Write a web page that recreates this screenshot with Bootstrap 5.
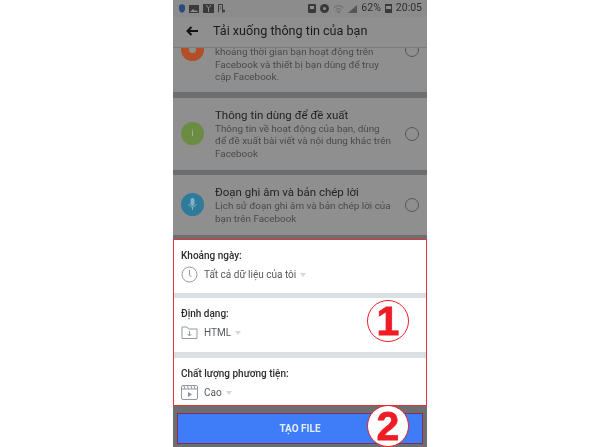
<!DOCTYPE html>
<html lang="vi"><head><meta charset="utf-8">
<link href="https://cdn.jsdelivr.net/npm/bootstrap@5.3.0/dist/css/bootstrap.min.css" rel="stylesheet">
<style>
html,body{margin:0;height:447px;overflow:hidden;background:#fff}
body{font-family:Roboto,"Liberation Sans",sans-serif;filter:blur(.4px)}
.phone{width:254px;height:447px;margin-left:173px;background:#6d6e70;position:relative;overflow:hidden}
.statusbar{height:17px;background:#8c8c8c;padding:0 5px 0 6px;font-size:10.5px;color:#2e2e2e;line-height:1}
.sb-ic{display:block}
.appbar{height:31px;background:#8f8f8f;border-bottom:1px solid #7c7c7c;padding:0 0 2px 13px;gap:15px;color:#1b1b1b;font-size:12.6px;position:relative;z-index:1}
.scroller{height:191px;overflow:hidden;justify-content:flex-end;padding-bottom:4px}
.optrow{background:#8f8f8f;padding:0 8px 0 8px;gap:11px;flex:none}
.opt-mid{height:72px;margin-top:6px}
.opt-low{height:60px;margin-top:5px}
.opt-top{height:84px}
.dot{width:23px;height:23px;border-radius:50%;flex:none;margin-bottom:1px}
.dot-o{background:#b24f28;display:flex;align-items:center;justify-content:center}
.dot-o-core{width:7px;height:7px;border-radius:50%;background:#8f8f8f}
.dot-g{background:#6a8c43}.dot-b{background:#2f7b99}
.dot-i{font-size:9px;color:#a9c08c}
.otext{width:178px;flex:none}
.otext-end{align-self:flex-end;padding-bottom:8px}
.ohead{font-size:11.5px;line-height:15px;color:#232323}
.obody{font-size:9.9px;line-height:12.6px;color:#4a4a4a}
.radio{width:14px;height:14px;border:1px solid #585858;border-radius:50%;flex:none;margin-left:auto}
.sheet{background:#fff;border:1px solid #e8323a;height:167px;flex:none}
.sect{padding:0 7px;flex:none;height:54px}
.sect.sfirst{height:53px}
.sect.slast{height:47px}
.lbl{font-size:10px;font-weight:500;color:#2c2c2c;line-height:13px;margin-top:9px}
.val{font-size:10px;color:#56585c;gap:6px;margin-top:4px;line-height:17px}
.caret{width:0;height:0;border:3.5px solid transparent;border-top:4px solid #d4d6da;border-bottom:0;margin-left:-2px}
.sdiv{height:6px;background:#dcdfe4;flex:none}
.sdiv.sthin{height:5px}
.footbar{padding:7px 4px 0}
.mainbtn{height:31px;width:100%;background:#3f7cf8;border:1px solid #8a2a5a;border-radius:0;color:#e3ecfb;font-size:10px;font-weight:700;padding:0;box-shadow:none}
.callout{position:absolute;left:194px;width:42px;height:42px;border-radius:50%;background:#fff;border:1.5px solid #e8202a;color:#ee1c25;font:700 41px/40px "Liberation Sans",sans-serif;text-align:center;-webkit-text-stroke:.8px #ee1c25}
.c1{top:300px}.c2{top:405px}
</style></head>
<body>
<div class="phone d-flex flex-column">
  <div class="statusbar d-flex align-items-center gap-1">
    <svg class="sb-ic" width="6" height="9" viewBox="0 0 6 9"><path d="M3 0l3 1.500V5c0 2-1.500 3-3 4C1.500 8 0 7 0 5V1.500z" fill="#2d4a7e"/></svg>
    <svg class="sb-ic" width="10" height="8" viewBox="0 0 10 8"><rect width="10" height="8" fill="#3a3a3a"/><path d="M1 7l3-3 2 2 1-1 2 2z" fill="#8f8f8f"/></svg>
    <svg class="sb-ic" width="11" height="9" viewBox="0 0 11 9"><rect width="11" height="9" fill="#3a3a3a"/><path d="M3 1l2.500 3L8 1M5.500 4v4" stroke="#8f8f8f" fill="none"/></svg>
    <svg class="sb-ic" width="7" height="9" viewBox="0 0 7 9"><path d="M.5 8.500V.5h4v8M2 3h1M2 5h1M5 5.500l2 3M7 5.500l-2 3" stroke="#3a3a3a" fill="none"/></svg>
    <div class="ms-auto d-flex align-items-center gap-1">
      <svg class="sb-ic" width="8" height="9" viewBox="0 0 8 9"><rect width="8" height="9" rx="1" fill="#3a3a3a"/><rect x="2" y="2" width="4" height="3" fill="#8f8f8f"/></svg>
      <svg class="sb-ic" width="9" height="9" viewBox="0 0 9 9"><circle cx="4.500" cy="4.500" r="4.500" fill="#3a3a3a"/><circle cx="4.500" cy="4.500" r="1.500" fill="#8f8f8f"/></svg>
      <svg class="sb-ic" width="11" height="8" viewBox="0 0 11 8"><path d="M.5 3c3-3 7-3 10 0M2.500 5c2-2 4-2 6 0M5.500 8l1.500-1.500c-1-.7-2-.7-3 0z" stroke="#666" fill="none"/></svg>
      <svg class="sb-ic" width="9" height="8" viewBox="0 0 9 8"><path d="M0 8L9 0v8z" fill="#555"/></svg>
      <span>62%</span>
      <svg class="sb-ic" width="7" height="9" viewBox="0 0 7 9"><rect width="7" height="9" fill="#3a3a3a"/><rect x="1" y="2" width="5" height="3" fill="#8f8f8f"/></svg>
      <span>20:05</span>
    </div>
  </div>
  <div class="appbar d-flex align-items-center">
    <svg width="12" height="10" viewBox="0 0 12 10"><path d="M12 5H2M5.500 1L1.500 5l4 4" stroke="#111" stroke-width="2" fill="none"/></svg>
    <span>Tải xuống thông tin của bạn</span>
  </div>
  <div class="scroller d-flex flex-column">
    <div class="optrow opt-top d-flex align-items-center">
      <div class="dot dot-o"><div class="dot-o-core"></div></div>
      <div class="otext otext-end"><div class="obody">khoảng thời gian bạn hoạt động trên<br>Facebook và thiết bị bạn dùng để truy<br>cập Facebook.</div></div>
      <div class="radio"></div>
    </div>
    <div class="optrow opt-mid d-flex align-items-center">
      <div class="dot dot-g dot-i d-flex align-items-center justify-content-center">i</div>
      <div class="otext"><div class="ohead">Thông tin dùng để đề xuất</div><div class="obody">Thông tin về hoạt động của bạn, dùng để đề xuất bài viết và nội dung khác trên Facebook</div></div>
      <div class="radio"></div>
    </div>
    <div class="optrow opt-low d-flex align-items-center">
      <div class="dot dot-b d-flex align-items-center justify-content-center">
        <svg width="9" height="13" viewBox="0 0 9 13"><rect x="2.500" y="0" width="4" height="8" rx="2" fill="#7fb3c8"/><path d="M1 6c0 4 7 4 7 0M4.500 9v3" stroke="#7fb3c8" fill="none"/></svg>
      </div>
      <div class="otext"><div class="ohead">Đoạn ghi âm và bản chép lời</div><div class="obody">Lịch sử đoạn ghi âm và bản chép lời của bạn trên Facebook</div></div>
      <div class="radio"></div>
    </div>
  </div>
  <div class="sheet d-flex flex-column">
    <div class="sect sfirst">
      <div class="lbl">Khoảng ngày:</div>
      <div class="val d-flex align-items-center">
        <svg width="17" height="17" viewBox="0 0 17 17"><circle cx="8.500" cy="8.500" r="7.500" fill="none" stroke="#9298a3"/><path d="M8.500 4v5l2 2" fill="none" stroke="#9298a3"/></svg>
        <span>Tất cả dữ liệu của tôi</span><i class="caret"></i>
      </div>
    </div>
    <div class="sdiv sthin"></div>
    <div class="sect">
      <div class="lbl">Định dạng:</div>
      <div class="val d-flex align-items-center">
        <svg width="17" height="15" viewBox="0 0 17 15"><path d="M1 13V2h5l1.500 2H16v9.500H1z" fill="none" stroke="#9298a3"/><path d="M8.500 6v5M6.500 9l2 2 2-2" fill="none" stroke="#9298a3"/></svg>
        <span>HTML</span><i class="caret"></i>
      </div>
    </div>
    <div class="sdiv"></div>
    <div class="sect slast">
      <div class="lbl">Chất lượng phương tiện:</div>
      <div class="val d-flex align-items-center">
        <svg width="17" height="15" viewBox="0 0 17 15"><rect x=".5" y=".5" width="16" height="14" rx="1.500" fill="none" stroke="#9298a3"/><path d="M1 4h15M3 1l1 3M6.500 1l1 3M10 1l1 3M13 1l1 3" stroke="#9298a3" fill="none"/><path d="M7 7l4 2.500-4 2.500z" fill="#8a8f99"/></svg>
        <span>Cao</span><i class="caret"></i>
      </div>
    </div>
  </div>
  <div class="footbar"><button class="btn mainbtn" type="button">TẠO FILE</button></div>
  <div class="callout c1">1</div>
  <div class="callout c2">2</div>
</div>
<script src="https://cdn.jsdelivr.net/npm/bootstrap@5.3.0/dist/js/bootstrap.bundle.min.js"></script>
</body></html>
